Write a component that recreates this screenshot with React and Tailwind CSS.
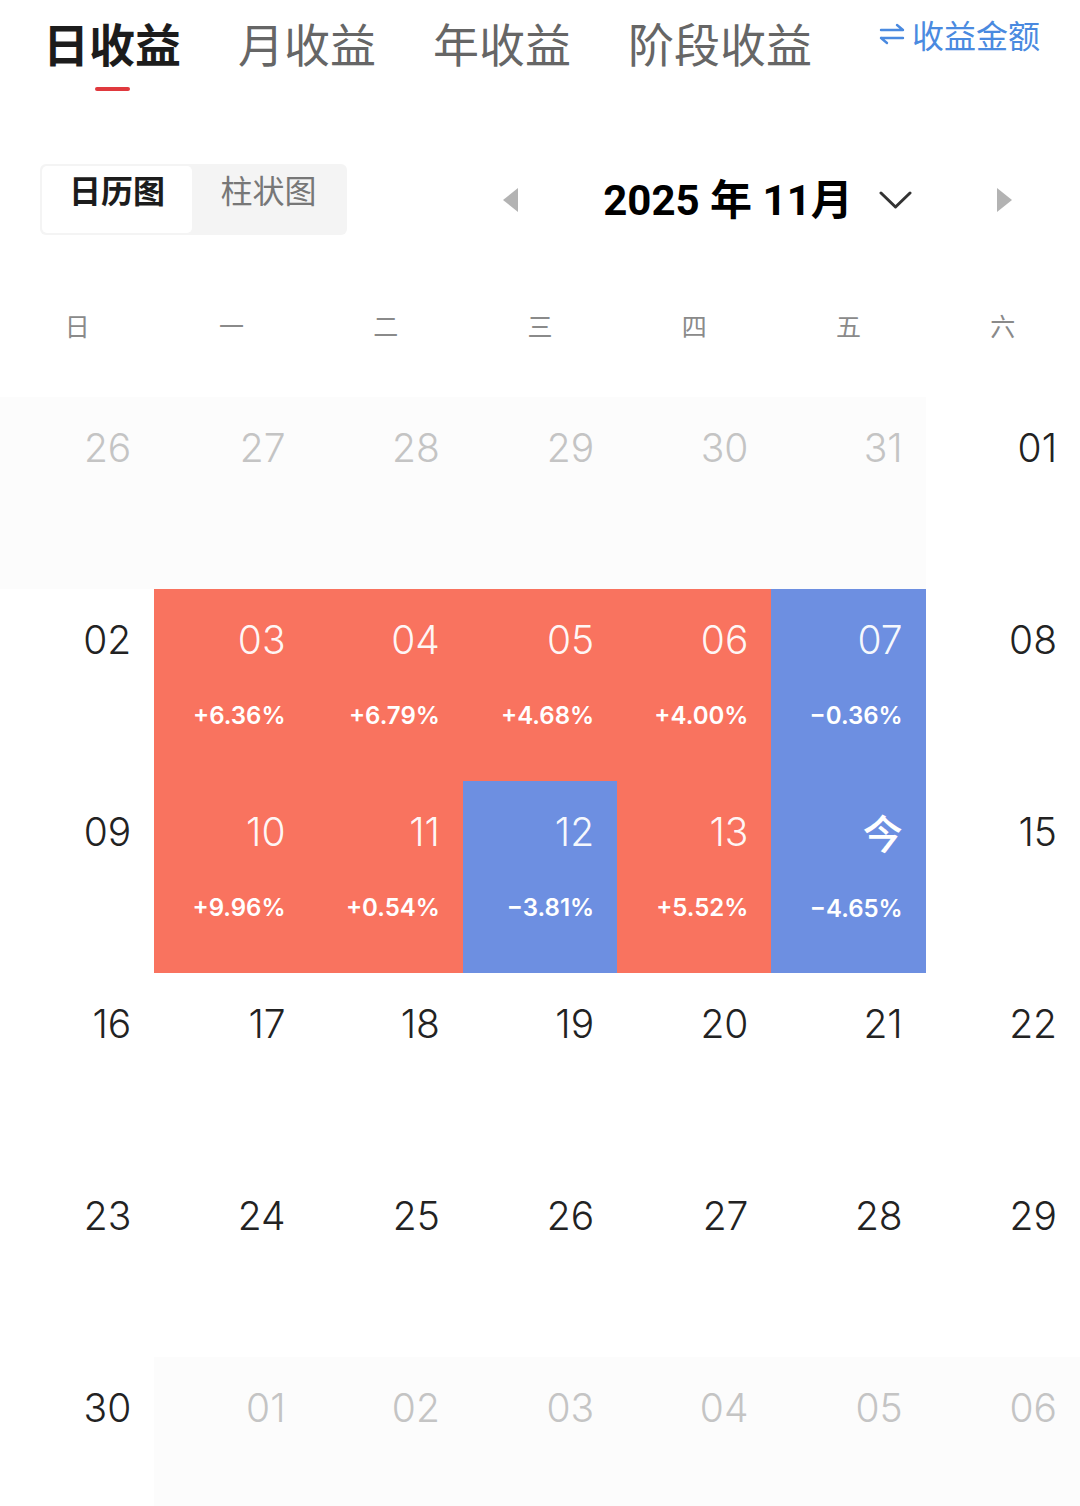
import React from 'react';

const RED = 'bg-[#f9735f]';
const BLUE = 'bg-[#6d8fe1]';

const weeks = [
  [
    { d: '26', out: true }, { d: '27', out: true }, { d: '28', out: true },
    { d: '29', out: true }, { d: '30', out: true }, { d: '31', out: true },
    { d: '01' },
  ],
  [
    { d: '02' },
    { d: '03', v: '+6.36%', up: true },
    { d: '04', v: '+6.79%', up: true },
    { d: '05', v: '+4.68%', up: true },
    { d: '06', v: '+4.00%', up: true },
    { d: '07', v: '−0.36%', up: false },
    { d: '08' },
  ],
  [
    { d: '09' },
    { d: '10', v: '+9.96%', up: true },
    { d: '11', v: '+0.54%', up: true },
    { d: '12', v: '−3.81%', up: false },
    { d: '13', v: '+5.52%', up: true },
    { d: '今', v: '−4.65%', up: false, today: true },
    { d: '15' },
  ],
  [
    { d: '16' }, { d: '17' }, { d: '18' }, { d: '19' }, { d: '20' }, { d: '21' }, { d: '22' },
  ],
  [
    { d: '23' }, { d: '24' }, { d: '25' }, { d: '26' }, { d: '27' }, { d: '28' }, { d: '29' },
  ],
  [
    { d: '30' },
    { d: '01', out: true }, { d: '02', out: true }, { d: '03', out: true },
    { d: '04', out: true }, { d: '05', out: true }, { d: '06', out: true },
  ],
];

const cjk = { fontFamily: '"Noto Sans CJK SC", "Noto Sans", sans-serif' };

function Cell({ c }) {
  const colored = c.v !== undefined;
  const bg = colored ? (c.up ? RED : BLUE) : c.out ? 'bg-[#fcfcfc]' : 'bg-white';
  const txt = colored ? 'text-white/95' : c.out ? 'text-[#c4c4c4]' : 'text-[#222]';
  return (
    <div className={`h-[192px] flex flex-col items-end pr-[23px] ${bg}`}>
      {c.today ? (
        <span className="mt-[30px] text-[40px] leading-[42px] text-white font-medium font-['Noto_Sans_CJK_SC',sans-serif]">
          今
        </span>
      ) : (
        <span className={`mt-[31px] text-[39px] leading-[40px] font-light font-['Inter',sans-serif] ${txt}`}>
          {c.d}
        </span>
      )}
      {colored && (
        <span className="mt-[43px] text-[24px] leading-[26px] font-semibold text-white font-['Inter',sans-serif]">
          {c.v}
        </span>
      )}
    </div>
  );
}

export default function App() {
  const tabs = ['日收益', '月收益', '年收益', '阶段收益'];
  return (
    <div className="w-[1080px] h-[1506px] overflow-hidden bg-white" style={cjk}>
      {/* top tabs */}
      <div className="flex items-start pt-[19px] pl-[43px] pr-[40px]">
        {tabs.map((t, i) => (
          <div key={t} className={`flex flex-col items-center ${i > 0 ? 'ml-[57px]' : ''}`}>
            <span
              className={`text-[46px] leading-[46px] ${i === 0 ? 'font-bold text-[#1c1c1c]' : 'text-[#666]'}`}
            >
              {t}
            </span>
            {i === 0 && <span className="mt-[22px] w-[35px] h-[4px] rounded-full bg-[#e0393e]" />}
          </div>
        ))}
        <div className="ml-auto flex items-center text-[32px] leading-[32px] text-[#4a8ae0] -mt-[1px]">
          <svg width="28" height="22" viewBox="0 0 28 22" fill="none" stroke="#4a8ae0" strokeWidth="2.4" strokeLinecap="round" strokeLinejoin="round" className="mr-[6px]">
            <path d="M3 7h22M19 2l6 5" />
            <path d="M25 15H3M9 20l-6-5" />
          </svg>
          收益金额
        </div>
      </div>

      {/* segmented + month nav */}
      <div className="mt-[73px] flex items-center h-[71px]">
        <div className="ml-[40px] w-[307px] h-[71px] bg-[#f4f4f4] rounded-[6px] p-[2px] flex">
          <div className="w-[150px] pb-[22px] bg-white rounded-[5px] flex items-center justify-center text-[32px] font-bold text-[#1c1c1c]">
            日历图
          </div>
          <div className="flex-1 pb-[22px] flex items-center justify-center text-[32px] text-[#777]">柱状图</div>
        </div>
        <div className="ml-[156px] w-[509px] flex items-center justify-between">
          <svg width="15" height="24" viewBox="0 0 15 24">
            <polygon points="15,0 15,24 0,12" fill="#b3b3b3" />
          </svg>
          <div className="flex items-center">
            <span className="text-[42px] leading-[42px] font-bold text-black font-['Roboto','Noto_Sans_CJK_SC',sans-serif] mt-[3px]">
              2025 年 11月
            </span>
            <svg width="33" height="20" viewBox="0 0 33 20" fill="none" stroke="#333" strokeWidth="3" strokeLinecap="round" strokeLinejoin="round" className="ml-[26px]">
              <path d="M2 3l14.5 14L31 3" />
            </svg>
          </div>
          <svg width="15" height="24" viewBox="0 0 15 24">
            <polygon points="0,0 0,24 15,12" fill="#b3b3b3" />
          </svg>
        </div>
      </div>

      {/* weekdays */}
      <div className="mt-[77px] grid grid-cols-7 text-[25px] leading-[26px] text-[#8a8a8a]">
        {['日', '一', '二', '三', '四', '五', '六'].map((w) => (
          <div key={w} className="text-center">{w}</div>
        ))}
      </div>

      {/* calendar grid */}
      <div className="mt-[59px] grid grid-cols-7">
        {weeks.flat().map((c, i) => (
          <Cell key={i} c={c} />
        ))}
      </div>
    </div>
  );
}
